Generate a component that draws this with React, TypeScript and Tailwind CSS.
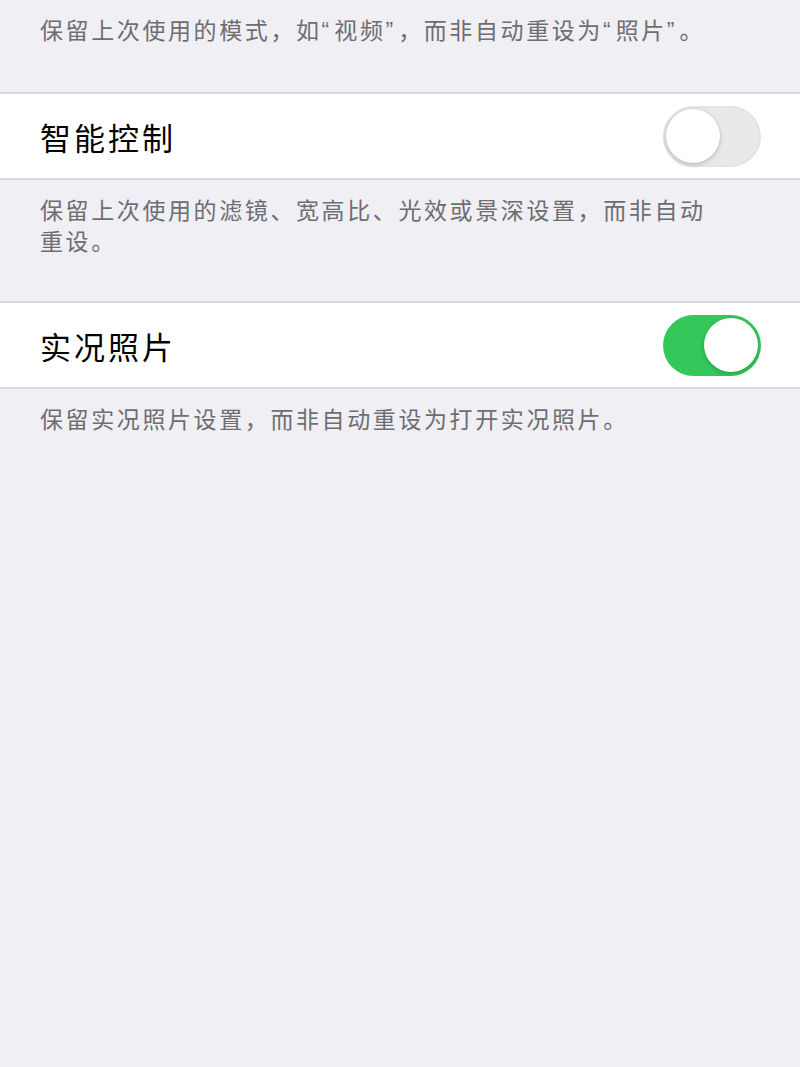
import React from "react";

const cjk = { fontFamily: '"Noto Sans CJK SC", "Noto Sans", sans-serif' };

function Q({ children }: { children: React.ReactNode }) {
  // Latin-width curly quotes, as the system font draws them
  return (
    <span className="tracking-[5px]" style={{ fontFamily: '"Liberation Sans", sans-serif' }}>
      {children}
    </span>
  );
}

function Note({ children, last }: { children: React.ReactNode; last?: boolean }) {
  return (
    <div
      className={`px-10 pt-[13.5px] ${last ? "" : "pb-[45.5px]"} text-[23px] leading-[31px] tracking-[2.6px] text-[#6d6d72]`}
    >
      {children}
    </div>
  );
}

function Toggle({ on }: { on: boolean }) {
  return (
    <div
      className={`relative h-[61px] w-[98px] rounded-full ${
        on ? "bg-[#34c759]" : "bg-[#e9e9eb] border-2 border-[#e4e4e6]"
      }`}
    >
      <div
        className={`absolute top-1/2 h-[54px] w-[54px] -translate-y-1/2 rounded-full bg-white shadow-[0_2px_5px_rgba(0,0,0,0.18),0_0_0_1px_rgba(0,0,0,0.04)] ${
          on ? "right-[3px]" : "left-[1px]"
        }`}
      />
    </div>
  );
}

function Row({ title, on }: { title: string; on: boolean }) {
  return (
    <div className="flex h-[88px] items-center justify-between border-y-2 border-[#d9d9dd] bg-white pl-10 pr-[39px]">
      <span className="text-[31px] leading-none tracking-[3px] text-black">{title}</span>
      <Toggle on={on} />
    </div>
  );
}

export default function App() {
  return (
    <div className="min-h-[1067px] w-full bg-[#efeff4]" style={cjk}>
      <Note>
        保留上次使用的模式，如<Q>“</Q>视频<Q>”</Q>，而非自动重设为<Q>“</Q>照片<Q>”</Q>。
      </Note>
      <Row title="智能控制" on={false} />
      <Note>
        保留上次使用的滤镜、宽高比、光效或景深设置，而非自动
        <br />
        重设。
      </Note>
      <Row title="实况照片" on={true} />
      <Note last>保留实况照片设置，而非自动重设为打开实况照片。</Note>
    </div>
  );
}
